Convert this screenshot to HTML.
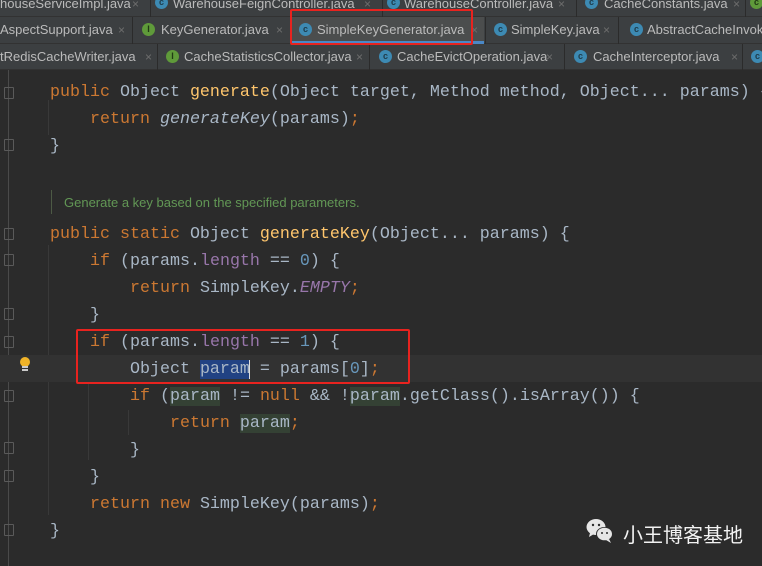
<!DOCTYPE html>
<html><head><meta charset="utf-8"><style>
*{margin:0;padding:0;box-sizing:border-box}
body{width:762px;height:566px;background:#2b2b2b;overflow:hidden;position:relative;font-family:"Liberation Sans",sans-serif}
.tabs{position:absolute;left:0;width:762px;background:#3c3f41;border-bottom:1px solid #323232}
.t{position:absolute;font-size:13px;color:#bbbbbb;white-space:nowrap}
.x{position:absolute;font-size:12px;color:#6e6e6e}
.sep{position:absolute;width:1px;background:#2b2b2b}
.ic{position:absolute;width:13px;height:13px;border-radius:50%;background:#3d8ab3;color:#1e3b4a;font-size:9px;font-weight:bold;text-align:center;line-height:13px}
.ic.g{background:#5f9a3a;color:#203a14}
.l{position:absolute;font-family:"Liberation Mono",monospace;font-size:16.66px;color:#a9b7c6;white-space:pre;height:22px;line-height:22px}
.k{color:#cc7832}.f{color:#ffc66d}.n{color:#6897bb}.v{color:#9876aa}.i{font-style:italic}
.gb{background:#344134}
.sel{background:#214283}
.fold{position:absolute;left:4px;width:10px;height:12px;border:1px solid #5a5a5a;border-radius:1px}
</style></head><body>
<div class="tabs" style="top:0;height:17px"></div>
<div class="tabs" style="top:17px;height:27px"></div>
<div class="tabs" style="top:44px;height:26px"></div>
<!-- row1 -->
<div class="t" style="left:0;top:-4px">houseServiceImpl.java</div><div class="x" style="left:132px;top:-3px">×</div>
<div class="sep" style="left:150px;top:0;height:17px"></div>
<div class="ic" style="left:155px;top:-4px">c</div><div class="t" style="left:173px;top:-4px">WarehouseFeignController.java</div><div class="x" style="left:364px;top:-3px">×</div>
<div class="sep" style="left:382px;top:0;height:17px"></div>
<div class="ic" style="left:387px;top:-4px">c</div><div class="t" style="left:404px;top:-4px">WarehouseController.java</div><div class="x" style="left:558px;top:-3px">×</div>
<div class="sep" style="left:576px;top:0;height:17px"></div>
<div class="ic" style="left:585px;top:-4px">c</div><div class="t" style="left:604px;top:-4px">CacheConstants.java</div><div class="x" style="left:733px;top:-3px">×</div>
<div class="sep" style="left:745px;top:0;height:17px"></div>
<div class="ic g" style="left:750px;top:-4px">c</div>
<!-- row2 -->
<div class="t" style="left:0;top:22px">AspectSupport.java</div><div class="x" style="left:118px;top:23px">×</div>
<div class="sep" style="left:132px;top:17px;height:27px"></div>
<div class="ic g" style="left:142px;top:23px">I</div><div class="t" style="left:161px;top:22px">KeyGenerator.java</div><div class="x" style="left:276px;top:23px">×</div>
<div class="sep" style="left:291px;top:17px;height:27px"></div>
<div style="position:absolute;left:292px;top:17px;width:192px;height:27px;background:#4b4d4d"></div>
<div style="position:absolute;left:292px;top:41px;width:192px;height:3px;background:#4a88c7"></div>
<div class="ic" style="left:299px;top:23px">c</div><div class="t" style="left:317px;top:22px">SimpleKeyGenerator.java</div><div class="x" style="left:471px;top:23px">×</div>
<div class="sep" style="left:485px;top:17px;height:27px"></div>
<div class="ic" style="left:494px;top:23px">c</div><div class="t" style="left:511px;top:22px">SimpleKey.java</div><div class="x" style="left:603px;top:23px">×</div>
<div class="sep" style="left:618px;top:17px;height:27px"></div>
<div class="ic" style="left:630px;top:23px">c</div><div class="t" style="left:647px;top:22px">AbstractCacheInvok</div>
<!-- row3 -->
<div class="t" style="left:0;top:49px">tRedisCacheWriter.java</div><div class="x" style="left:145px;top:50px">×</div>
<div class="sep" style="left:157px;top:44px;height:26px"></div>
<div class="ic g" style="left:166px;top:50px">I</div><div class="t" style="left:184px;top:49px">CacheStatisticsCollector.java</div><div class="x" style="left:356px;top:50px">×</div>
<div class="sep" style="left:369px;top:44px;height:26px"></div>
<div class="ic" style="left:379px;top:50px">c</div><div class="t" style="left:397px;top:49px">CacheEvictOperation.java</div><div class="x" style="left:546px;top:50px">×</div>
<div class="sep" style="left:564px;top:44px;height:26px"></div>
<div class="ic" style="left:574px;top:50px">c</div><div class="t" style="left:593px;top:49px">CacheInterceptor.java</div><div class="x" style="left:731px;top:50px">×</div>
<div class="sep" style="left:742px;top:44px;height:26px"></div>
<div class="ic" style="left:751px;top:50px">c</div>
<!-- red box tab -->
<div style="position:absolute;left:290px;top:9px;width:183px;height:36px;border:2px solid #e8231f;border-radius:2px"></div>

<!-- gutter -->
<div style="position:absolute;left:8px;top:70px;width:1px;height:496px;background:#4a4a4a"></div>
<div class="fold" style="top:87px"></div><div class="fold" style="top:139px"></div><div class="fold" style="top:228px"></div>
<div class="fold" style="top:254px"></div><div class="fold" style="top:308px"></div><div class="fold" style="top:336px"></div>
<div class="fold" style="top:390px"></div><div class="fold" style="top:442px"></div><div class="fold" style="top:470px"></div><div class="fold" style="top:524px"></div>
<!-- indent guides -->
<div style="position:absolute;left:48px;top:100px;width:1px;height:35px;background:#393939"></div>
<div style="position:absolute;left:48px;top:245px;width:1px;height:270px;background:#393939"></div>
<div style="position:absolute;left:88px;top:355px;width:1px;height:105px;background:#393939"></div>
<div style="position:absolute;left:128px;top:410px;width:1px;height:25px;background:#393939"></div>
<!-- current line -->
<div style="position:absolute;left:0;top:355px;width:762px;height:27px;background:#323232"></div>
<div style="position:absolute;left:20px;top:357px;width:10px;height:10px;border-radius:50%;background:#f0b429"></div>
<div style="position:absolute;left:22px;top:366px;width:6px;height:5px;border-top:2px solid #ccc;border-bottom:2px solid #ccc"></div>

<div class="l" style="left:50px;top:82px"><span class="k">public </span>Object <span class="f">generate</span>(Object target, Method method, Object... params) {</div>
<div class="l" style="left:50px;top:109px">    <span class="k">return </span><span class="i">generateKey</span>(params)<span class="k">;</span></div>
<div class="l" style="left:50px;top:136px">}</div>
<div style="position:absolute;left:51px;top:190px;width:1px;height:24px;background:#4d5a45"></div>
<div style="position:absolute;left:64px;top:195px;font-size:13px;color:#629755">Generate a key based on the specified parameters.</div>
<div class="l" style="left:50px;top:224px"><span class="k">public static </span>Object <span class="f">generateKey</span>(Object... params) {</div>
<div class="l" style="left:50px;top:251px">    <span class="k">if </span>(params.<span class="v">length</span> == <span class="n">0</span>) {</div>
<div class="l" style="left:50px;top:278px">        <span class="k">return </span>SimpleKey.<span class="v i">EMPTY</span><span class="k">;</span></div>
<div class="l" style="left:50px;top:305px">    }</div>
<div class="l" style="left:50px;top:332px">    <span class="k">if </span>(params.<span class="v">length</span> == <span class="n">1</span>) {</div>
<div class="l" style="left:50px;top:359px">        Object <span class="sel">param</span><span style="border-left:1px solid #ddd;margin-left:-1px"></span> = params[<span class="n">0</span>]<span class="k">;</span></div>
<div class="l" style="left:50px;top:386px">        <span class="k">if </span>(<span class="gb">param</span> != <span class="k">null </span>&amp;&amp; !<span class="gb">param</span>.getClass().isArray()) {</div>
<div class="l" style="left:50px;top:413px">            <span class="k">return </span><span class="gb">param</span><span class="k">;</span></div>
<div class="l" style="left:50px;top:440px">        }</div>
<div class="l" style="left:50px;top:467px">    }</div>
<div class="l" style="left:50px;top:494px">    <span class="k">return new </span>SimpleKey(params)<span class="k">;</span></div>
<div class="l" style="left:50px;top:521px">}</div>
<div style="position:absolute;left:76px;top:329px;width:334px;height:55px;border:2px solid #e8231f;border-radius:2px"></div>

<!-- watermark -->
<svg style="position:absolute;left:586px;top:518px" width="28" height="26" viewBox="0 0 28 26">
<ellipse cx="10" cy="9" rx="9.5" ry="8" fill="#e6e6e6"/><path d="M4 15 L3 19 L8 16Z" fill="#e6e6e6"/>
<ellipse cx="18.5" cy="16" rx="8.5" ry="7" fill="#2b2b2b"/>
<ellipse cx="18.5" cy="16" rx="7.5" ry="6.3" fill="#e6e6e6"/><path d="M23 21 L25 25 L20 22Z" fill="#e6e6e6"/>
<circle cx="7" cy="7" r="1.2" fill="#2b2b2b"/><circle cx="13" cy="7" r="1.2" fill="#2b2b2b"/>
<circle cx="16" cy="15" r="1" fill="#2b2b2b"/><circle cx="21" cy="15" r="1" fill="#2b2b2b"/>
</svg>
<div style="position:absolute;left:623px;top:519px;font-size:20px;color:#f2f2f2;font-family:'Liberation Sans','Noto Sans CJK SC',sans-serif">小王博客基地</div>
</body></html>
